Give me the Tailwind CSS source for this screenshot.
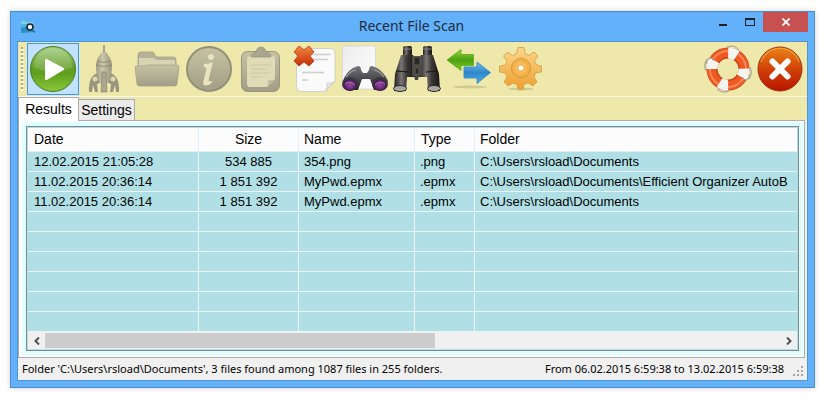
<!DOCTYPE html>
<html lang="en">
<head>
    <meta charset="UTF-8">
    <meta name="viewport" content="width=device-width, initial-scale=1.0">
    <title>Recent File Scan</title>
    <script src="https://cdn.jsdelivr.net/npm/@tailwindcss/browser@4"></script>
</head>
<body class="bg-white pt-[11px] pl-[10px] pr-5 pb-5 font-['Liberation_Sans',sans-serif] text-black">

    <!-- shared gradients -->
    <svg class="absolute w-0 h-0" aria-hidden="true">
        <defs>
            <linearGradient id="green" x1="0" y1="0" x2="0" y2="1"><stop offset="0" stop-color="#a4cc7c"/><stop offset=".45" stop-color="#66a02c"/><stop offset=".6" stop-color="#5f9f1c"/><stop offset="1" stop-color="#8ac83a"/></linearGradient>
            <linearGradient id="stone" x1="0" y1="0" x2="0" y2="1"><stop offset="0" stop-color="#c6c2a2"/><stop offset="1" stop-color="#a29e86"/></linearGradient>
            <linearGradient id="stoneSide" x1="0" y1="0" x2="1" y2="0"><stop offset="0" stop-color="#9b9780"/><stop offset=".4" stop-color="#cbc7ab"/><stop offset="1" stop-color="#99957e"/></linearGradient>
            <linearGradient id="paper" x1="0" y1="0" x2="1" y2="1"><stop offset="0" stop-color="#ececec"/><stop offset="1" stop-color="#ffffff"/></linearGradient>
            <linearGradient id="cross" x1="0" y1="0" x2="0" y2="1"><stop offset="0" stop-color="#f58a3c"/><stop offset="1" stop-color="#c42c08"/></linearGradient>
            <linearGradient id="barrel" x1="0" y1="0" x2="1" y2="0"><stop offset="0" stop-color="#1d1b1b"/><stop offset=".35" stop-color="#7b7674"/><stop offset=".6" stop-color="#3d3938"/><stop offset="1" stop-color="#151313"/></linearGradient>
            <linearGradient id="dark" x1="0" y1="0" x2="0" y2="1"><stop offset="0" stop-color="#77777b"/><stop offset="1" stop-color="#232327"/></linearGradient>
            <radialGradient id="lens"><stop offset="0" stop-color="#964aa2"/><stop offset=".7" stop-color="#6a2a7a"/><stop offset="1" stop-color="#3b1545"/></radialGradient>
            <linearGradient id="arrowGreen" x1="0" y1="0" x2="0" y2="1"><stop offset="0" stop-color="#97d83a"/><stop offset=".5" stop-color="#4ca012"/><stop offset="1" stop-color="#7fcb26"/></linearGradient>
            <linearGradient id="arrowBlue" x1="0" y1="0" x2="0" y2="1"><stop offset="0" stop-color="#78c0ee"/><stop offset=".5" stop-color="#2c86c8"/><stop offset="1" stop-color="#55b0ec"/></linearGradient>
            <linearGradient id="gold" x1="0" y1="0" x2="0" y2="1"><stop offset="0" stop-color="#fbd78c"/><stop offset="1" stop-color="#eca02e"/></linearGradient>
            <linearGradient id="red" x1="0" y1="0" x2="0" y2="1"><stop offset="0" stop-color="#ea8418"/><stop offset=".5" stop-color="#d24208"/><stop offset="1" stop-color="#b81400"/></linearGradient>
        </defs>
    </svg>

    <div class="border border-[#4a8cc8] bg-[#63b1fb] px-[6px] pb-[6px] shadow-[0_0_6px_rgba(0,0,0,0.18)]">

        <!-- title bar -->
        <header class="flex h-[29px] items-start">
            <div class="flex w-24 pt-2 pl-1">
                <svg class="w-4 h-4" viewBox="0 0 16 16">
                    <path d="M0 1h4l1 1h7v10H0z" fill="#7cd0ec"/>
                    <path d="M0 4h12v8l-12 1z" fill="#4fb4de"/>
                    <path d="M0 8l12-3v7L0 13z" fill="#2b90c4"/>
                    <circle cx="9" cy="7" r="3" fill="#e8f2f6" stroke="#20262c" stroke-width="1.6"/>
                    <path d="M11 9.500l3 3" stroke="#1e6c9c" stroke-width="1.500"/>
                </svg>
            </div>
            <h1 class="flex-1 pt-1 text-center font-['Noto_Sans',sans-serif] text-[14px] leading-5 text-[#222c3a]">Recent File Scan</h1>
            <div class="flex">
                <button class="flex h-5 w-[26px] items-end justify-center pb-[6px]" aria-label="Minimize"><span class="h-[2px] w-2 bg-[#222]"></span></button>
                <button class="flex h-5 w-[27px] items-start justify-center pt-[6px]" aria-label="Maximize"><span class="h-2 w-[10px] border border-t-2 border-[#222]"></span></button>
                <button class="flex h-5 w-[45px] items-center justify-center bg-[#c75050]" aria-label="Close">
                    <svg class="w-2 h-2" viewBox="0 0 8 8"><path d="M.5.5l7 7M7.500.5l-7 7" stroke="#fff" stroke-width="1.800"/></svg>
                </button>
            </div>
        </header>

        <div class="border border-[#4f94d2] bg-[#eee8aa]">

            <!-- toolbar -->
            <nav class="flex h-[55px] items-center border-b border-[#f6f5ec] pl-[3px] pr-px" aria-label="Tools">
                <div class="mr-1 h-11 w-[2px] bg-[repeating-linear-gradient(to_bottom,#a8a488_0px,#a8a488_2px,#fdfcf0_2px,#fdfcf0_4px)]"></div>
                <button class="h-[52px] w-[52px] border border-[#3399ff] bg-[#c2e0ff] p-px" aria-label="Start scan">
                    <svg class="w-12 h-12" viewBox="0 0 48 48">
                        <circle cx="24" cy="24" r="22.500" fill="url(#green)" stroke="#4a7c1c"/>
                        <path d="M5 22a19 19 0 0 1 38 0c-10 5-28 6-38 0z" fill="#fff" opacity=".16"/>
                        <path d="M16 15.500q0-2.500 2.200-1.300l16 8.500q2 1.300 0 2.600l-16 9.500q-2.200 1.200-2.200-1.300z" fill="#fff"/>
                    </svg>
                </button>
                <button class="h-[52px] w-[52px] p-[2px]" aria-label="Launch" disabled>
                    <svg class="w-12 h-12" viewBox="0 0 48 48">
                        <path d="M16 28Q7 32 8 47h3l1-7 2 7h3l-1-8 3-1M30 28q9 4 8 19h-3l-1-7-2 7h-3l1-8-3-1" fill="#98947e"/>
                        <circle cx="14" cy="34" r="2.500" fill="#ddd8a4"/><circle cx="32" cy="34" r="2.500" fill="#ddd8a4"/>
                        <path d="M23 5c-5 5-8 10-8 16 0 7 2 13 4 17h8c2-4 4-10 4-17 0-6-3-11-8-16z" fill="url(#stoneSide)"/>
                        <path d="M16 16q7 3 14 0M15 20q8 3 16 0" fill="none" stroke="#88846f" stroke-width=".8"/>
                        <path d="M23 0v7" stroke="#a09c86" stroke-width="1.800"/>
                        <path d="M21 27h4l1 20h-6z" fill="#aaa68e" stroke="#8b8773" stroke-width=".7"/>
                    </svg>
                </button>
                <button class="h-[52px] w-[52px] p-[2px]" aria-label="Open folder" disabled>
                    <svg class="w-12 h-12" viewBox="0 0 48 48">
                        <path d="M5 10q0-3 3-3h11q2 0 3 3l1 2h17q3 0 3 3v8H5z" fill="#b6b296" stroke="#a5a189" stroke-width=".8"/>
                        <path d="M6 13h15l2 2h19v8H6z" fill="#d8d3b2"/>
                        <path d="M2 22q0-1 2-1h8l2-1h30q2 0 2 2l-2 17q0 2-3 2H7q-3 0-3-2z" fill="url(#stone)" stroke="#a19d86" stroke-width=".7"/>
                    </svg>
                </button>
                <button class="h-[52px] w-[52px] p-[2px]" aria-label="Information" disabled>
                    <svg class="w-12 h-12" viewBox="0 0 48 48">
                        <circle cx="24" cy="24" r="22" fill="url(#stone)" stroke="#94907a" stroke-width="2"/>
                        <circle cx="26" cy="12" r="3" fill="#e9e4bf"/>
                        <path d="M19 19q5 0 9-2l-4.500 18q0 2 3 1l1 1q-5 5-8.500 3-1.500-1-.5-4l3-12q0-2-3-2z" fill="#e9e4bf"/>
                    </svg>
                </button>
                <button class="h-[52px] w-[52px] p-[2px]" aria-label="Copy to clipboard" disabled>
                    <svg class="w-12 h-12" viewBox="0 0 48 48">
                        <rect x="4.500" y="6.500" width="38" height="40" rx="6" fill="url(#stone)" stroke="#98947d"/>
                        <path d="M14 11h21q3 0 3 3v20l-8 8H13q-3 0-3-3V14q0-3 4-3z" fill="#e0dbb6"/>
                        <path d="M38 34l-8 8q2-4 1-7 4 1 7-1z" fill="#c0bb9c"/>
                        <path d="M14 20h20M14 24h16M14 28h19M14 32h11" stroke="#cdc8a8"/>
                        <path d="M14 12q0-4 5-5 1-5 5-5t5 5q5 1 5 5z" fill="#aaa68d" stroke="#989480" stroke-width=".7"/>
                    </svg>
                </button>
                <button class="h-[52px] w-[52px] p-[2px]" aria-label="Delete results">
                    <svg class="w-12 h-12" viewBox="0 0 48 48">
                        <path d="M11 3.500h31q4 0 4 4V36l-10 10.500H12q-4 0-4.500-4V7.500q0-4 3.500-4z" fill="#fafafa" stroke="#cfcfcc"/>
                        <path d="M46 36L36 46.500q3-5 2-8.500 5 1 8-2z" fill="#e4e4e4" stroke="#c4c4c4" stroke-width=".7"/>
                        <path d="M22 9.500h20M23 14.500h16M13 27.500h22M13 35h6" stroke="#cdcdcd" stroke-width="1.300"/>
                        <path d="M5 7l5-6 5 4 5-4 5 6-4 4 4 5-5 5-5-4-5 4-5-5 4-5z" fill="url(#cross)" stroke="#b43a10" stroke-width=".8"/>
                    </svg>
                </button>
                <button class="h-[52px] w-[52px] p-[2px]" aria-label="Search in document">
                    <svg class="w-12 h-12" viewBox="0 0 48 48">
                        <path d="M1.500 1h33v43h-33z" fill="url(#paper)" stroke="#dadada"/>
                        <path d="M2 36q3-9 10-13l5-2q3 0 3 4l2 3h4l2-3q0-4 3-4l5 2q7 4 11 13l-6 9h-8l-4-11h-8l-4 11H8z" fill="url(#dark)"/>
                        <path d="M5 32q4-6 10-7M43 32q-4-6-10-7" fill="none" stroke="#a0a0a4" stroke-width="1.200"/>
                        <ellipse cx="9" cy="39" rx="8" ry="7" fill="#3a3a3e"/><ellipse cx="39" cy="39" rx="8" ry="7" fill="#3a3a3e"/>
                        <ellipse cx="9" cy="40" rx="6.500" ry="5.500" fill="url(#lens)"/><ellipse cx="39" cy="40" rx="6.500" ry="5.500" fill="url(#lens)"/>
                        <path d="M4 39q5-4 10 1M34 40q5-5 10-1" fill="none" stroke="#b27abc" stroke-width=".9"/>
                    </svg>
                </button>
                <button class="h-[52px] w-[52px] p-[2px]" aria-label="Search">
                    <svg class="w-12 h-12" viewBox="0 0 48 48">
                        <rect x="10" y="1" width="9" height="10" rx="2" fill="url(#barrel)"/><rect x="30" y="1" width="9" height="10" rx="2" fill="url(#barrel)"/>
                        <path d="M10 4h9M30 4h9" stroke="#99938f" stroke-width=".8"/>
                        <path d="M8 10h12l2 4v18h-8l-1 14H1L2 29z" fill="url(#barrel)"/>
                        <path d="M40 10H28l-2 4v18h8l1 14h12l-1-17z" fill="url(#barrel)"/>
                        <path d="M19 11h10v20h-3l-1 4h-3l-1-4h-2z" fill="#4a4643"/>
                        <path d="M21 12h6v8h-6zM22 23h4v6h-4z" fill="#2a2726" stroke="#7b7570" stroke-width=".6"/>
                        <path d="M3 26l12 1M33 27l12-1" stroke="#191717" stroke-width="1.200"/>
                        <ellipse cx="7" cy="43.500" rx="6.500" ry="3" fill="#aaa6a0" stroke="#2b2928"/><ellipse cx="41" cy="43.500" rx="6.500" ry="3" fill="#aaa6a0" stroke="#2b2928"/>
                    </svg>
                </button>
                <button class="h-[52px] w-[52px] p-[2px]" aria-label="Transfer">
                    <svg class="w-12 h-12" viewBox="0 0 48 48">
                        <ellipse cx="25" cy="42" rx="17" ry="1.500" fill="#cfc994"/>
                        <path d="M2 15L16 4.500v5h12.500v11H16v5z" fill="url(#arrowGreen)" stroke="#5aa81c" stroke-width=".8"/>
                        <path d="M45.500 27.500L32 17v5H19v11h13v5.500z" fill="url(#arrowBlue)" stroke="#2a86c6" stroke-width=".8"/>
                    </svg>
                </button>
                <button class="h-[52px] w-[52px] p-[2px]" aria-label="Options">
                    <svg class="w-12 h-12" viewBox="0 0 48 48">
                        <ellipse cx="24" cy="44" rx="13" ry="1.500" fill="#d2ca94"/>
                        <path d="M21 2.500h6l1 6 4 2 5-3.500 4 4-3.500 5 2 4 5 1v6l-6 1-1.500 4 3 5-4 4-5-3-4 1.500-1 5h-5l-1-5-4-1.500-5 3-4-4 3-5-1.500-4-6-1v-6l6-1 1.500-4-3.500-5 4-4 5 3.500 4-2z" fill="url(#gold)" stroke="#d9a048" stroke-width=".9"/>
                        <circle cx="24" cy="23" r="9.500" fill="#f3b24c" stroke="#d8942c"/>
                        <circle cx="24" cy="23" r="6" fill="#f7bd5c"/>
                        <circle cx="24" cy="23" r="3" fill="#fffdf4" stroke="#d8942c" stroke-width=".6"/>
                    </svg>
                </button>
                <button class="ml-auto h-[52px] w-[52px] p-[2px]" aria-label="Help">
                    <svg class="w-12 h-12" viewBox="0 0 48 48">
                        <circle cx="24" cy="24" r="16" fill="none" stroke="#c8441a" stroke-width="11"/>
                        <circle cx="24" cy="24" r="16.500" fill="none" stroke="#f05a22" stroke-width="9"/>
                        <circle cx="24" cy="24" r="18" fill="none" stroke="#f9875a" stroke-width="2"/>
                        <!-- white bands -->
                        <circle cx="24" cy="24" r="16" fill="none" stroke="#f4f4f2" stroke-width="11" stroke-dasharray="9 16.130" transform="rotate(-1 24 24)"/>
                        <g fill="none" stroke="#8e9290" stroke-width=".9">
                            <path d="M23 2q7-3 12 3M46 22q3 6-1 12M25 46q-6 3-12-2M2 26q-3-6 1-12"/>
                            <path d="M2 19q0-6 5-6l3 3M46 29q0 6-5 6l-3-3"/>
                        </g>
                    </svg>
                </button>
                <button class="h-[52px] w-[52px] p-[2px]" aria-label="Exit">
                    <svg class="w-12 h-12" viewBox="0 0 48 48">
                        <circle cx="24" cy="24" r="22" fill="url(#red)" stroke="#a03010"/>
                        <path d="M5 17a20 20 0 0 1 38 0" fill="none" stroke="#f6b050" stroke-width="1.200" opacity=".7"/>
                        <path d="M16.500 16.500l15 15M31.500 16.500l-15 15" stroke="#fff" stroke-width="6" stroke-linecap="round"/>
                    </svg>
                </button>
            </nav>

            <!-- tabs -->
            <div class="flex h-[23px] items-end text-[14px]" role="tablist">
                <button class="relative z-10 -mb-px h-6 w-[61px] border border-b-0 border-[#acacac] bg-white pb-[2px] leading-5" role="tab" aria-selected="true">Results</button>
                <button class="-ml-px h-[21px] w-[57px] border border-b-0 border-[#acacac] bg-[#ebebeb] leading-5" role="tab" aria-selected="false">Settings</button>
            </div>

            <main class="bg-[#f0f0f0] pr-[2px]">
                <div class="border border-[#acacac] bg-white pt-px pr-px pb-[2px] pl-[3px]">
                    <div class="bg-[#e0ffff] p-1">
                        <div class="border border-[#828790] bg-[#b0e0e6] p-px">
                            <div class="overflow-hidden">
                                <table class="w-full table-fixed border-separate border-spacing-0 text-left text-[13px] whitespace-nowrap">
                                    <thead class="bg-[#fcfcfc] text-[14px]">
                                        <tr class="h-6 *:border-b *:border-[#e3eff5] *:font-normal">
                                            <th class="w-[171px] border-r pl-[6px]">Date</th>
                                            <th class="w-[100px] border-r text-center">Size</th>
                                            <th class="w-[116px] border-r pl-[5px]">Name</th>
                                            <th class="w-[60px] border-r pl-[6px]">Type</th>
                                            <th class="pl-[5px]">Folder</th>
                                        </tr>
                                    </thead>
                                    <tbody id="rows"></tbody>
                                </table>
                            </div>
                            <div class="flex h-[17px] items-center bg-[#f0f0f0]">
                                <button class="flex h-[17px] w-[17px] items-center justify-center" aria-label="Scroll left">
                                    <svg class="w-2 h-2" viewBox="0 0 8 8"><path d="M6 .5L2.500 4 6 7.500" fill="none" stroke="#505050" stroke-width="2"/></svg>
                                </button>
                                <div class="flex-1"><div class="h-[15px] w-[53%] bg-[#cdcdcd]"></div></div>
                                <button class="flex h-[17px] w-[17px] items-center justify-center" aria-label="Scroll right">
                                    <svg class="w-2 h-2" viewBox="0 0 8 8"><path d="M2 .5L5.500 4 2 7.500" fill="none" stroke="#505050" stroke-width="2"/></svg>
                                </button>
                            </div>
                        </div>
                    </div>
                </div>
            </main>

            <!-- status bar -->
            <footer class="flex h-[22px] items-center justify-between bg-[#f0f0f0] pl-1 pr-[3px] font-['Noto_Sans',sans-serif] text-[11px]">
                <span>Folder 'C:\Users\rsload\Documents', 3 files found among 1087 files in 255 folders.</span>
                <div class="flex items-center gap-2">
                    <span>From 06.02.2015 6:59:38 to 13.02.2015 6:59:38</span>
                    <svg class="mt-1 w-3 h-3" viewBox="0 0 12 12"><path d="M9 1h2v2H9zM5 5h2v2H5zM9 5h2v2H9zM1 9h2v2H1zM5 9h2v2H5zM9 9h2v2H9z" fill="#a6a6a6"/></svg>
                </div>
            </footer>
        </div>
    </div>

<script>
var files = [
    ['12.02.2015 21:05:28', '534 885', '354.png', '.png', 'C:\\Users\\rsload\\Documents'],
    ['11.02.2015 20:36:14', '1 851 392', 'MyPwd.epmx', '.epmx', 'C:\\Users\\rsload\\Documents\\Efficient Organizer AutoB'],
    ['11.02.2015 20:36:14', '1 851 392', 'MyPwd.epmx', '.epmx', 'C:\\Users\\rsload\\Documents']
];
var rowCount = 9;
var tbody = document.getElementById('rows');

for (var i = 0; i < rowCount; i++) {
    var tr = document.createElement('tr');
    tr.className = 'h-5';
    for (var c = 0; c < 5; c++) {
        var td = document.createElement('td');
        td.className = 'h-5 overflow-hidden border-b border-[#eef4f4] leading-[19px]';
        td.className += c < 4 ? ' border-r' : '';
        td.className += c === 1 ? ' text-center' : c === 0 ? ' pl-[6px]' : ' pl-[5px]';
        td.textContent = files[i] ? files[i][c] : '';
        tr.appendChild(td);
    }
    tbody.appendChild(tr);
}
</script>
</body>
</html>
